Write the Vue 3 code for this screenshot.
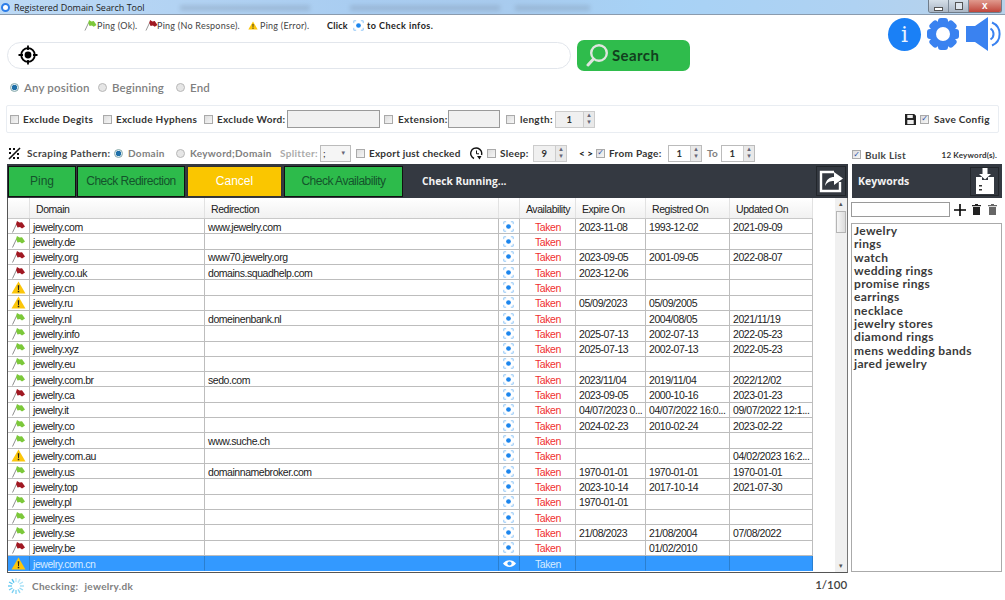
<script setup>
const rows = [
  ['com','r','www.jewelry.com','2023-11-08','1993-12-02','2021-09-09'],
  ['de','g','','','',''],
  ['org','r','www70.jewelry.org','2023-09-05','2001-09-05','2022-08-07'],
  ['co.uk','r','domains.squadhelp.com','2023-12-06','',''],
  ['cn','w','','','',''],
  ['ru','w','','05/09/2023','05/09/2005',''],
  ['nl','g','domeinenbank.nl','','2004/08/05','2021/11/19'],
  ['info','g','','2025-07-13','2002-07-13','2022-05-23'],
  ['xyz','g','','2025-07-13','2002-07-13','2022-05-23'],
  ['eu','g','','','',''],
  ['com.br','g','sedo.com','2023/11/04','2019/11/04','2022/12/02'],
  ['ca','r','','2023-09-05','2000-10-16','2023-01-23'],
  ['it','g','','04/07/2023 0...','04/07/2022 16:0...','09/07/2022 12:1...'],
  ['co','g','','2024-02-23','2010-02-24','2023-02-22'],
  ['ch','g','www.suche.ch','','',''],
  ['com.au','w','','','','04/02/2023 16:2...'],
  ['us','g','domainnamebroker.com','1970-01-01','1970-01-01','1970-01-01'],
  ['top','r','','2023-10-14','2017-10-14','2021-07-30'],
  ['pl','g','','1970-01-01','',''],
  ['es','g','','','',''],
  ['se','g','','21/08/2023','21/08/2004','07/08/2022'],
  ['be','r','','','01/02/2010',''],
  ['com.cn','w','','','','']
]
const keywords = ['Jewelry','rings','watch','wedding rings','promise rings','earrings','necklace','jewelry stores','diamond rings','mens wedding bands','jared jewelry']
const spokes = Array.from({ length: 12 }, (_, i) => i * 30)
</script>

<template>
  <div class="app">
    <svg class="defs" width="0" height="0" aria-hidden="true">
      <defs>
        <symbol id="fg" viewBox="0 0 14 13"><path d="M1 12.5 L5 4" stroke="#8f8f8f" stroke-width="1" fill="none"/><path d="M5.5 1 L8 2.6 L10.5 2.2 L13.5 6.5 L10.5 8.5 L8.5 7 L6 7.5 L4.5 4Z" fill="#7cc83a"/></symbol>
        <symbol id="fr" viewBox="0 0 14 13"><path d="M1 12.5 L5 4" stroke="#8f8f8f" stroke-width="1" fill="none"/><path d="M5.5 1 L8 2.6 L10.5 2.2 L13.5 6.5 L10.5 8.5 L8.5 7 L6 7.5 L4.5 4Z" fill="#a01822"/></symbol>
        <symbol id="fw" viewBox="0 0 16 14"><path d="M8 .5 L15.5 13.5 H.5Z" fill="#fcc60a"/><path d="M7.2 4.5 H8.8 L8.5 9.8 H7.5Z M7.2 10.6 H8.8 V12.2 H7.2Z" fill="#222"/></symbol>
        <symbol id="tg" viewBox="0 0 14 14"><path d="M1 4 V1 H4 M10 1 H13 V4 M13 10 V13 H10 M4 13 H1 V10" stroke="#8cc4f5" stroke-width="1.2" fill="none"/><circle cx="7" cy="7" r="3" fill="#1c86ee"/></symbol>
      </defs>
    </svg>

    <header class="titlebar">
      <span class="ghost g1"></span><span class="ghost g2"></span><span class="ghost g3"></span>
      <span class="appicon"></span>
      <span class="title">Registered Domain Search Tool</span>
      <div class="winbtns">
        <span class="wb"><i class="wmin"></i></span>
        <span class="wb"><i class="wmax"></i></span>
        <span class="wb close">x</span>
      </div>
    </header>

    <section class="top">
      <div class="topleft">
        <div class="legend">
          <svg class="lg-ic l1" width="13" height="12"><use href="#fg"/></svg><span class="t1">Ping (Ok).</span>
          <svg class="lg-ic l2" width="13" height="12"><use href="#fr"/></svg><span class="t2">Ping (No Response).</span>
          <svg class="lg-ic l3" width="10" height="9"><use href="#fw"/></svg><span class="t3">Ping (Error).</span>
          <b class="t4">Click</b>
          <svg class="lg-ic l4" width="11" height="11"><use href="#tg"/></svg>
          <b class="t5">to Check infos.</b>
        </div>
        <div class="searchrow">
          <div class="searchbox">
            <svg width="20" height="20" viewBox="0 0 20 20"><circle cx="10" cy="10" r="6.8" fill="none" stroke="#000" stroke-width="1.8"/><circle cx="10" cy="10" r="3.4" fill="#000"/><path d="M10 0.5V5M10 15V19.5M0.5 10H5M15 10H19.5" stroke="#000" stroke-width="1.8"/></svg>
          </div>
          <div class="searchbtn">
            <svg width="22" height="24" viewBox="0 0 22 24"><circle cx="13" cy="10" r="7.8" fill="none" stroke="#dfe5df" stroke-width="2.4"/><path d="M7.5 16 L2 22" stroke="#dfe5df" stroke-width="3" stroke-linecap="round"/></svg>
            <span>Search</span>
          </div>
        </div>
      </div>
      <div class="topicons">
        <div class="info">i</div>
        <svg class="gear" width="32" height="32" viewBox="0 0 32 32"><g fill="#3a82f0"><rect x="11" y="0" width="10" height="32" rx="3"/><rect x="11" y="0" width="10" height="32" rx="3" transform="rotate(45 16 16)"/><rect x="11" y="0" width="10" height="32" rx="3" transform="rotate(90 16 16)"/><rect x="11" y="0" width="10" height="32" rx="3" transform="rotate(135 16 16)"/><circle cx="16" cy="16" r="12"/></g><circle cx="16" cy="16" r="7" fill="#fff"/></svg>
        <svg class="speaker" width="35" height="34" viewBox="0 0 35 34"><path d="M0 9 H9 L22 0 V34 L9 25 H0Z" fill="#3a82f0"/><path d="M24.5 11.5 A6.5 6.5 0 0 1 24.5 22.5 M26 5.5 A12.5 12.5 0 0 1 26 28.5" fill="none" stroke="#3a82f0" stroke-width="2"/></svg>
      </div>
    </section>

    <div class="radios">
      <span class="radio on"></span><span class="rl1">Any position</span>
      <span class="radio r2"></span><span class="rl2">Beginning</span>
      <span class="radio r3"></span><span class="rl3">End</span>
    </div>

    <div class="options">
      <i class="cb c1"></i><b class="o1">Exclude Degits</b>
      <i class="cb c2"></i><b class="o2">Exclude Hyphens</b>
      <i class="cb c3"></i><b class="o3">Exclude Word:</b>
      <span class="field f1"></span>
      <i class="cb c4"></i><b class="o4">Extension:</b>
      <span class="field f2"></span>
      <i class="cb c5"></i><b class="o5">length:</b>
      <span class="spin dis s1"><em>1</em><span class="arrows"><u>▴</u><u>▾</u></span></span>
      <svg class="save" width="11" height="11" viewBox="0 0 12 12"><path d="M0 0H10L12 2V12H0Z" fill="#222"/><rect x="2.5" y="1" width="6" height="3.4" fill="#eee"/><rect x="2.5" y="6.5" width="7" height="4.5" fill="#eee"/></svg>
      <i class="cb checked c6">✓</i><b class="o6">Save Config</b>
    </div>

    <main class="main">
      <div class="leftcol">
        <div class="scrape">
          <svg class="pat" width="13" height="13" viewBox="0 0 13 13"><path d="M1 12 L12 1" stroke="#111" stroke-width="1.6"/><path d="M1 1h2v2H1zM5 1h2v2H5zM1 5h2v2H1zM9 6h2v2H9zM9 10h2v2H9zM5 10h2v2H5z" fill="#111"/></svg>
          <b class="p1">Scraping Pathern:</b>
          <span class="radio on p2"></span><b class="p3 grey">Domain</b>
          <span class="radio p4"></span><b class="p5 grey">Keyword;Domain</b>
          <b class="p6 lgrey">Splitter:</b>
          <span class="select"><em>;</em><u>▾</u></span>
          <i class="cb p7"></i><b class="p8">Export just checked</b>
          <svg class="clock" width="13" height="13" viewBox="0 0 13 13"><path d="M4 11.5 A5.5 5.5 0 1 1 11.5 8" fill="none" stroke="#111" stroke-width="1.4"/><path d="M6.5 3.5V6.8H9" fill="none" stroke="#111"/><path d="M7 9h4.5L9.5 12.5Z" fill="#111"/></svg>
          <i class="cb p9"></i><b class="p10">Sleep:</b>
          <span class="spin dis s2"><em>9</em><span class="arrows"><u>▴</u><u>▾</u></span></span>
          <b class="p11">&lt; &gt;</b>
          <i class="cb checked p12">✓</i><b class="p13">From Page:</b>
          <span class="spin s3"><em>1</em><span class="arrows"><u>▴</u><u>▾</u></span></span>
          <b class="p14 grey">To</b>
          <span class="spin s4"><em>1</em><span class="arrows"><u>▴</u><u>▾</u></span></span>
        </div>

        <div class="toolbar">
          <button class="tb b1">Ping</button>
          <button class="tb b2">Check Redirection</button>
          <button class="tb b3">Cancel</button>
          <button class="tb b4">Check Availability</button>
          <b class="running">Check Running...</b>
          <span class="iconbox export">
            <svg width="24" height="24" viewBox="0 0 24 24"><path d="M15 3 H2 V22 H21 V13" fill="none" stroke="#fff" stroke-width="2.4"/><path d="M6 17 C7 10 11 8 15 8 V3 L24 9.5 L15 16 V12 C11 12 8 13 6 17Z" fill="#fff"/></svg>
          </span>
        </div>

        <div class="gridwrap">
          <div class="grid">
            <div class="ghead">
              <span></span><span class="hl">Domain</span><span class="hl">Redirection</span><span></span>
              <span class="hc">Availability</span><span class="hc">Expire On</span><span class="hc">Registred On</span><span class="hc">Updated On</span>
            </div>
            <div v-for="row in rows" :key="row[0]" class="grow" :class="{ sel: row[0] === 'com.cn' }">
              <span class="cflag"><svg width="15" height="13"><use :href="'#f' + row[1]"/></svg></span>
              <span>jewelry.{{ row[0] }}</span>
              <span>{{ row[2] }}</span>
              <span class="cicon">
                <svg v-if="row[0] === 'com.cn'" width="13" height="9" viewBox="0 0 13 9"><path d="M0 4.5 C3 0 10 0 13 4.5 C10 9 3 9 0 4.5Z" fill="#fff"/><circle cx="6.5" cy="4.5" r="2.1" fill="#3399ff"/></svg>
                <svg v-else width="11" height="11"><use href="#tg"/></svg>
              </span>
              <span class="taken">Taken</span>
              <span>{{ row[3] }}</span><span>{{ row[4] }}</span><span>{{ row[5] }}</span>
            </div>
          </div>
          <div class="scroll">
            <span class="sa up">▴</span>
            <span class="thumb"></span>
            <span class="sa down">▾</span>
          </div>
        </div>
      </div>

      <aside class="rightcol">
        <div class="bulk">
          <i class="cb checked">✓</i><b class="bl">Bulk List</b><b class="count">12 Keyword(s).</b>
        </div>
        <div class="kwhead">
          <b>Keywords</b>
          <span class="iconbox import">
            <svg width="18" height="26" viewBox="0 0 18 26"><path d="M0 9 H6 V12 H12 V9 H18 V26 H0Z" fill="#fff"/><path d="M6.5 0 H11.5 V6 H15 L9 11.5 L3 6 H6.5Z" fill="#fff"/><path d="M3 17h3v1.5H3zM3 21h3v1.5H3z" fill="#333"/></svg>
          </span>
        </div>
        <div class="kwinput">
          <span class="kwfield"></span>
          <svg class="plus" width="12" height="12"><path d="M6 0V12M0 6H12" stroke="#000" stroke-width="1.6"/></svg>
          <svg class="trash" width="9" height="11" viewBox="0 0 9 11"><path d="M3 0H6V1H9V2.2H0V1H3ZM1 3H8V11H1Z" fill="#222"/></svg>
          <svg class="trash t2x" width="9" height="11" viewBox="0 0 9 11"><path d="M3 0H6V1H9V2.2H0V1H3ZM1 3H8V11H1Z" fill="#666"/></svg>
        </div>
        <div class="kwlist">
          <div v-for="k in keywords" :key="k">{{ k }}</div>
        </div>
      </aside>
    </main>

    <footer class="footer">
      <svg class="spinner" width="18" height="18" viewBox="0 0 18 18"><g v-for="a in spokes" :key="a" :transform="`rotate(${a} 9 9)`"><path d="M9 1V5" stroke="#4cc0ee" stroke-width="1.4" :opacity="0.35 + a / 550"/></g></svg>
      <b class="check1">Checking:</b><b class="check2">jewelry.dk</b>
      <span class="pages">1/100</span>
    </footer>
  </div>
</template>

<style>
html, body { margin: 0; background: #fff; }
</style>

<style scoped>
.app { width: 1005px; height: 600px; overflow: hidden; background: #fff; font-family: Lato, "Open Sans", sans-serif; color: #333; font-size: 10px; letter-spacing: .3px; }
.defs { position: absolute; }
b { font-weight: 700; }

.titlebar { height: 14px; border-bottom: 1px solid #8a9bae; position: relative; display: flex; align-items: center; background: linear-gradient(90deg, #bcd9f5 0, #a9cdf1 35%, #a8cbee 50%, #a7d2f6 65%, #afd2f2 85%, #b9d2ea 100%); overflow: hidden; }
.ghost { position: absolute; height: 6px; top: 5px; background: #7f94ac; opacity: .35; filter: blur(2px); }
.g1 { left: 180px; width: 130px; }
.g2 { left: 350px; width: 150px; }
.g3 { left: 515px; width: 75px; }
.appicon { width: 5px; height: 5px; border-radius: 50%; background: #fff; border: 2.5px solid #2e7ee8; margin-left: 1px; box-sizing: content-box; position: relative; flex: none; }
.title { margin-left: 4px; font-size: 9px; letter-spacing: -.02px; color: #222; font-family: "Open Sans", sans-serif; position: relative; }
.winbtns { margin-left: auto; margin-right: 3px; display: flex; height: 12px; align-self: flex-start; border: 1px solid #6f7c8a; border-top: 0; border-radius: 0 0 3px 3px; overflow: hidden; position: relative; }
.wb { width: 19px; background: linear-gradient(#d5dfe9, #aab6c4); display: flex; align-items: center; justify-content: center; border-right: 1px solid #7e8b99; }
.wb.close { width: 32px; border: 0; background: linear-gradient(#e09a8e, #c0463b); color: #fff; font: 700 10px "Liberation Sans", sans-serif; line-height: 10px; }
.wmin { width: 7px; height: 2px; background: #fff; border: 1px solid #555; margin-top: 5px; }
.wmax { width: 6px; height: 6px; border: 1px solid #555; background: #dfe6ee; }

.top { height: 65px; display: flex; }
.topleft { width: 880px; }
.legend { height: 20px; display: flex; align-items: center; color: #444; font-size: 9px; letter-spacing: .25px; white-space: nowrap; }
.lg-ic { flex: none; }
.l1 { margin-left: 84px; }
.t1 { margin-left: 0; width: 48px; }
.t2 { margin-left: -1px; width: 91px; }
.t3 { margin-left: 2px; width: 67px; }
.t4 { color: #222; width: 26px; }
.t5 { color: #222; margin-left: 3px; letter-spacing: .45px; }
.searchrow { display: flex; align-items: center; height: 32px; margin-top: 4px; margin-left: 7px; }
.searchbox { width: 564px; height: 27px; border: 1px solid #e2e6ec; border-radius: 14px; display: flex; align-items: center; padding-left: 10px; box-sizing: border-box; }
.searchbtn { margin-left: 6px; width: 113px; height: 31px; border-radius: 7px; background: #2fbc4c; display: flex; align-items: center; padding-left: 9px; box-sizing: border-box; color: #123f1e; font-size: 15px; font-weight: 700; letter-spacing: .4px; }
.searchbtn span { margin-left: 4px; margin-bottom: 1px; }
.topicons { display: flex; align-items: center; height: 34px; margin-top: 2px; margin-left: 8px; }
.info { width: 33px; height: 33px; border-radius: 50%; background: #1a80f6; color: #e8f2ff; font: 400 22px/33px "DejaVu Serif", serif; text-align: center; letter-spacing: 0; flex: none; }
.gear { margin-left: 6px; flex: none; }
.speaker { margin-left: 7px; flex: none; }

.radio { width: 9px; height: 9px; border-radius: 50%; background: #e6e6e6; border: 1px solid #b8b8b8; box-sizing: border-box; flex: none; display: inline-block; }
.radio.on { background: radial-gradient(circle, #1f6fa8 0 2.4px, #dbe9f3 3px); border-color: #8aa; }
.radios { display: flex; align-items: center; height: 16px; margin-top: -1px; margin-left: 10px; font-size: 11.5px; font-weight: 600; color: #808080; white-space: nowrap; letter-spacing: .15px; }
.rl1 { margin-left: 5px; width: 70px; }
.r2 { margin-left: 4px; }
.rl2 { margin-left: 5px; width: 60px; }
.r3 { margin-left: 4px; }
.rl3 { margin-left: 5px; }

.cb { width: 9px; height: 9px; box-sizing: border-box; border: 1px solid #aaa; background: linear-gradient(135deg, #ddd, #f6f6f6); flex: none; display: inline-flex; align-items: center; justify-content: center; font: 700 8px/8px "DejaVu Sans", sans-serif; color: #2a4fa8; letter-spacing: 0; }
.options { margin: 10px 0 0 6px; width: 993px; height: 28px; box-sizing: border-box; border: 1px solid #e9edf2; border-radius: 2px; display: flex; align-items: center; white-space: nowrap; }
.c1 { margin-left: 3px; }
.o1 { margin-left: 4px; width: 80px; }
.o2 { margin-left: 4px; width: 88px; }
.o3 { margin-left: 4px; width: 70px; }
.field { height: 18px; background: #f0f0f0; border: 1px solid #9a9a9a; box-sizing: border-box; flex: none; }
.f1 { width: 93px; }
.c4 { margin-left: 4px; }
.o4 { margin-left: 5px; width: 50px; }
.f2 { width: 52px; }
.c5 { margin-left: 6px; }
.o5 { margin-left: 5px; width: 35px; }
.spin { height: 17px; border: 1px solid #ccc; box-sizing: border-box; display: flex; align-items: center; flex: none; background: #fff; }
.spin.dis { background: #f0f0f0; }
.spin em { flex: 1; text-align: center; font-style: normal; font-weight: 700; font-size: 9.5px; }
.arrows { width: 10px; height: 100%; border-left: 1px solid #ccc; display: flex; flex-direction: column; background: #e9e9e9; }
.arrows u, .select u { flex: 1; text-decoration: none; font: 7px/7px "DejaVu Sans", sans-serif; color: #667; text-align: center; letter-spacing: 0; }
.s1 { width: 40px; }
.save { margin-left: 310px; }
.c6 { margin-left: 4px; }
.o6 { margin-left: 5px; }

.main { display: flex; margin-top: 9px; margin-left: 7px; }
.leftcol { width: 841px; }
.scrape { height: 22px; display: flex; align-items: center; white-space: nowrap; }
.pat { margin-left: 1px; }
.grey { color: #808080; }
.lgrey { color: #aaa; }
.p1 { margin-left: 6px; width: 80px; color: #444; }
.p2 { margin-left: 7px; }
.p3 { margin-left: 5px; width: 40px; }
.p4 { margin-left: 8px; }
.p5 { margin-left: 5px; width: 84px; }
.p6 { margin-left: 6px; width: 40px; }
.select { width: 31px; height: 17px; box-sizing: border-box; border: 1px solid #bbb; background: #f5f5f5; display: flex; align-items: center; padding-left: 2px; flex: none; }
.select em { flex: 1; font-style: normal; }
.p7 { margin-left: 5px; }
.p8 { margin-left: 4px; width: 94px; letter-spacing: .2px; }
.clock { margin-left: 7px; }
.p9 { margin-left: 4px; }
.p10 { margin-left: 4px; width: 33px; }
.s2 { width: 34px; }
.p11 { margin-left: 12px; width: 17px; color: #111; letter-spacing: 0; }
.p13 { margin-left: 4px; width: 59px; }
.s3, .s4 { width: 34px; border-color: #bbb; }
.p14 { margin-left: 5px; width: 14px; }

.toolbar { height: 34px; background: #343941; display: flex; align-items: center; }
.tb { height: 31px; box-sizing: border-box; border: 1px solid #111; padding: 0; background: #2dbb4b; color: #14542b; font: 12px "Liberation Sans", sans-serif; letter-spacing: -.5px; flex: none; }
.b1 { width: 68px; margin-left: 1px; letter-spacing: 0; }
.b2 { width: 108px; margin-left: 1px; }
.b3 { width: 95px; margin-left: 2px; background: #fac600; color: #fff; border-color: #333; letter-spacing: 0; }
.b4 { width: 119px; margin-left: 2px; }
.running { color: #f2f2f2; font: 700 10.2px "Open Sans", sans-serif; margin-left: 19px; letter-spacing: 0; }
.iconbox { border: 1px solid #22262b; display: flex; align-items: center; justify-content: center; box-sizing: border-box; flex: none; }
.export { width: 30px; height: 30px; margin-left: auto; margin-right: 2px; }

.gridwrap { height: 375px; display: flex; border-left: 1px solid #555; border-bottom: 1px solid #555; border-right: 1px solid #777; box-sizing: border-box; width: 841px; }
.grid { width: 805px; font: 10.5px "Liberation Sans", sans-serif; letter-spacing: -.45px; color: #222; flex: none; }
.ghead, .grow { display: grid; grid-template-columns: 22px 175px 294px 21px 56px 70px 84px 83px; }
.ghead { height: 21px; background: linear-gradient(#fff, #f1f1f1); border-bottom: 1px solid #c9c9c9; box-sizing: border-box; }
.ghead span { display: flex; align-items: center; border-right: 1px solid #e2e2e2; overflow: hidden; white-space: nowrap; padding-top: 1px; }
.hl { padding-left: 6px; }
.hc { padding-left: 6px; }
.grow { height: 15.32px; }
.grow span { border-right: 1px solid #bdbdbd; border-bottom: 1px solid #bdbdbd; box-sizing: border-box; display: flex; align-items: center; padding-left: 3px; padding-top: 1px; white-space: nowrap; overflow: hidden; }
.grow .cflag { padding-left: 3px; padding-top: 0; }
.grow .cicon { padding-left: 4px; padding-top: 0; }
.grow .taken { color: #f02f2f; padding-left: 15px; }
.grow.sel { background: #3399ff; color: #d8ecff; }
.grow.sel span { border-right-color: #2a7fd0; border-bottom-color: #3399ff; }
.grow.sel .taken { color: #d8ecff; }
.scroll { margin-left: auto; width: 12px; background: #f0f0f0; display: flex; flex-direction: column; align-items: center; color: #555; font: 7px/9px "DejaVu Sans", sans-serif; }
.sa { height: 12px; display: flex; align-items: center; }
.down { margin-top: auto; }
.thumb { width: 10px; height: 22px; margin-top: 1px; background: linear-gradient(90deg, #f6f6f6, #dcdcdc); border: 1px solid #b5b5b5; box-sizing: border-box; }

.rightcol { width: 151px; margin-left: 3px; }
.bulk { height: 22px; display: flex; align-items: center; padding-top: 3px; box-sizing: border-box; padding-left: 1px; }
.bl { margin-left: 4px; color: #444; }
.count { margin-left: auto; margin-right: 5px; font-size: 8px; letter-spacing: .2px; }
.kwhead { height: 34px; background: #343941; display: flex; align-items: center; color: #f2f2f2; margin-left: 1px; }
.kwhead b { margin-left: 6px; font: 700 10.5px "Open Sans", sans-serif; letter-spacing: 0; }
.import { width: 29px; height: 29px; margin-left: auto; margin-right: 3px; }
.kwinput { height: 25px; display: flex; align-items: center; padding-bottom: 2px; box-sizing: border-box; }
.kwfield { width: 99px; height: 15px; box-sizing: border-box; border: 1px solid #9a9a9a; background: #fff; }
.plus { margin-left: 4px; }
.trash { margin-left: 6px; }
.t2x { margin-left: 7px; }
.kwlist { height: 349px; box-sizing: border-box; border: 1px solid #aaa; padding: 0 0 0 2px; font-size: 12px; font-weight: 700; line-height: 13.3px; color: #3a3a3a; letter-spacing: .35px; }

.footer { height: 27px; display: flex; align-items: center; margin-left: 7px; margin-top: -1px; }
.spinner { flex: none; }
.check1 { margin-left: 7px; color: #808080; }
.check2 { margin-left: 6px; color: #808080; }
.pages { margin-left: 682px; margin-bottom: 3px; font-size: 11.5px; font-weight: 600; letter-spacing: 0; color: #444; }
</style>
